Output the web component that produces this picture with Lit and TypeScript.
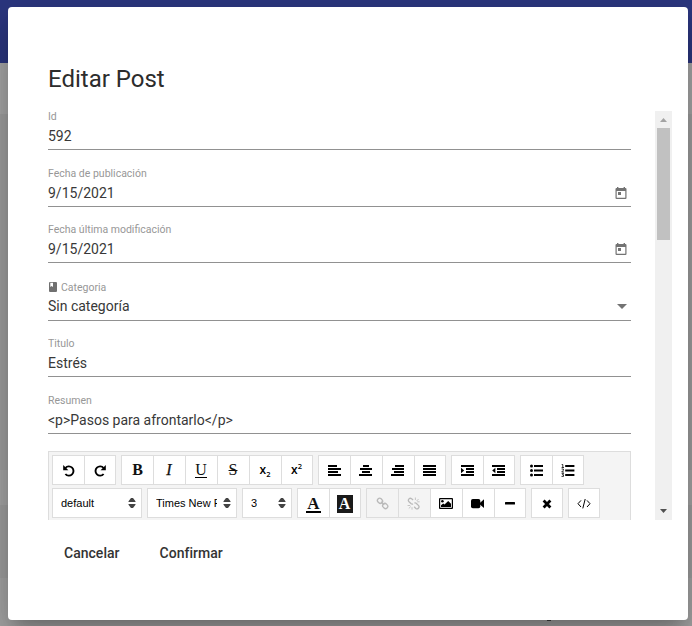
import { LitElement, html, svg, css, nothing } from "lit";
import { customElement, property } from "lit/decorators.js";

const lines = (rows: number[][]) =>
  rows.map(([x, y, w]) => svg`<rect x=${x} y=${y} width=${w} height="2"></rect>`);

const icons: Record<string, unknown> = {
  undo: svg`<path d="M3.4 5A4.6 4.6 0 1 1 3.4 11" fill="none" stroke="currentColor" stroke-width="1.9"></path><path d="M1.2 2V7.2H6.4Z"></path>`,
  redo: svg`<path d="M10.6 5A4.6 4.6 0 1 0 10.6 11" fill="none" stroke="currentColor" stroke-width="1.9"></path><path d="M12.8 2V7.2H7.6Z"></path>`,
  left: lines([[0, 2, 9], [0, 5, 13], [0, 8, 10], [0, 11, 13]]),
  center: lines([[4, 2, 6], [1, 5, 12], [3, 8, 8], [0, 11, 13]]),
  right: lines([[4, 2, 9], [1, 5, 12], [3, 8, 10], [0, 11, 13]]),
  justify: lines([[0, 2, 13], [0, 5, 13], [0, 8, 13], [0, 11, 13]]),
  indent: svg`${lines([[0, 2, 13], [5, 5, 8], [5, 8, 8], [0, 11, 13]])}<path d="M0 4.8L3.2 7.5L0 10.2Z"></path>`,
  outdent: svg`${lines([[0, 2, 13], [5, 5, 8], [5, 8, 8], [0, 11, 13]])}<path d="M3.4 4.8L.2 7.5L3.4 10.2Z"></path>`,
  bullets: svg`${lines([[4, 2, 9], [4, 6.5, 9], [4, 11, 9]])}<circle cx="1.5" cy="3" r="1.5"></circle><circle cx="1.5" cy="7.5" r="1.5"></circle><circle cx="1.5" cy="12" r="1.5"></circle>`,
  numbers: svg`${lines([[4.2, 2, 9.2], [4.2, 6.5, 9.2], [4.2, 11, 9.2]])}<path d="M.7 1.5H1.8V4.3M.6 4.5H3M.6 6H2.4V7.2L.7 9H3M.6 10.4H2.6L1.5 11.8H2.5V13.4H.5" fill="none" stroke="currentColor" stroke-width=".8"></path>`,
  link: svg`<g fill="none" stroke="currentColor" stroke-width="1.3"><rect x="-2.7" y="-2.2" width="5.4" height="4.4" rx="2.1" transform="translate(4 4.8) rotate(45)"></rect><rect x="-2.7" y="-2.2" width="5.4" height="4.4" rx="2.1" transform="translate(9.2 10) rotate(45)"></rect><path d="M5 5.8L8.2 9"></path></g>`,
  unlink: svg`<g fill="none" stroke="currentColor" stroke-width="1.3"><path d="M6.1 4L4.6 2.7A2 2 0 0 0 1.8 5.5L4.2 7.8Q5 8.3 6 7.8M7.2 10.8L8.8 12.4A2 2 0 0 0 11.6 9.6L9.2 7.2Q8.4 6.7 7.4 7.2"></path><path d="M8.4 1.5V4M9.6 5L11.6 3M10.2 5.8H12.6M.6 9.5H3.2M1.8 12.4L3.8 10.6M5 11.2V13.6" stroke-width=".8"></path></g>`,
  image: svg`<path fill-rule="evenodd" d="M1 2H13Q14 2 14 3V12Q14 13 13 13H1Q0 13 0 12V3Q0 2 1 2ZM1.2 3.2V11.8H12.8V3.2Z"></path><circle cx="3.4" cy="5.3" r="1.3"></circle><path d="M2 11V9.2L4.2 7.4L5.5 8.6L9.2 5L12 7.8V11Z"></path>`,
  video: svg`<rect x="0" y="3" width="9.3" height="9.2" rx="1.8"></rect><path d="M8.3 7.6L13 3.2V12L8.3 7.9Z"></path>`,
  rule: svg`<rect x="2" y="6" width="10" height="2.4" rx=".5"></rect>`,
  clear: svg`<path d="M3.6 4.6L10.4 11.4M10.4 4.6L3.6 11.4" stroke="currentColor" stroke-width="2.8"></path>`,
  code: svg`<path d="M4 4.4L1 7.7L4 11M10 4.4L13 7.7L10 11M8.2 3L5.8 12.4" fill="none" stroke="currentColor" stroke-width="1"></path>`,
};

@customElement("post-field")
class PostField extends LitElement {
  @property() label = "";
  @property() value = "";
  @property() kind = "text";
  static styles = css`
    :host { display: flex; flex-direction: column; justify-content: flex-end; box-sizing: border-box; border-bottom: 1px solid #919191; }
    .label { display: flex; align-items: center; height: 14px; font-size: 10.5px; line-height: 14px; color: #979797; }
    .row { display: flex; justify-content: space-between; align-items: center; height: 23px; padding-bottom: 2px; font-size: 14px; color: #383838; }
    .value { padding-top: 2px; line-height: 21px; }
    .select .row { height: 22px; padding-bottom: 3px; }
    .select .value { padding-top: 0; line-height: 22px; }
    .book { width: 8px; height: 10px; margin: -3px 4px 0 1px; fill: #707070; }
    .cal { width: 12px; height: 14px; margin-right: 4px; fill: #737373; }
    .caret { width: 10px; height: 5px; margin-right: 4px; fill: #737373; }
  `;
  render() {
    return html`<div class=${this.kind}>
      <div class="label">${this.kind === "select"
        ? html`<svg class="book" viewBox="0 0 8 10"><path fill-rule="evenodd" d="M1 0H7Q8 0 8 1V9Q8 10 7 10H1Q0 10 0 9V1Q0 0 1 0ZM1.3 .8V5L2.6 4.1L4 5V.8Z"></path></svg>`
        : nothing}${this.label}</div>
      <div class="row"><span class="value">${this.value}</span>${this.kind === "date"
        ? html`<svg class="cal" viewBox="0 0 12 14"><path fill-rule="evenodd" d="M2 1H3.4V2H8.6V1H10V2H10.4Q11.5 2 11.5 3V12Q11.5 13 10.4 13H1.6Q.5 13 .5 12V3Q.5 2 1.6 2H2ZM1.7 5V11.8H10.3V5ZM3 6H6V9H3Z"></path></svg>`
        : this.kind === "select"
        ? html`<svg class="caret" viewBox="0 0 10 5"><path d="M0 0H10L5 5Z"></path></svg>`
        : nothing}</div>
    </div>`;
  }
}

@customElement("editor-toolbar")
class EditorToolbar extends LitElement {
  static styles = css`
    :host { display: flex; flex-direction: column; gap: 3px; box-sizing: border-box; height: 80px; padding: 3px; border: 1px solid #ddd; background: #f4f4f4; color: #000; }
    .line { display: flex; gap: 5px; }
    .group { display: flex; box-sizing: border-box; height: 30px; border: 1px solid #ddd; background: #fff; }
    .btn { display: flex; align-items: center; justify-content: center; box-sizing: border-box; width: 32px; padding-right: 1px; border-left: 1px solid #ddd; }
    .btn:first-child { width: 31px; border-left: 0; padding-right: 0; }
    .btn:last-child:not(:first-child) { width: 31px; padding-right: 1px; }
    .btn:only-child { width: 30px; }
    .icon { width: 14px; height: 15px; fill: currentColor; overflow: visible; }
    .off { background: #f4f4f4; color: #b9b9b9; }
    .serif { font: 700 16px/20px "Liberation Serif", serif; color: #111; }
    .italic { font-style: italic; font-weight: 400; -webkit-text-stroke: .25px #111; }
    .under { font-weight: 400; line-height: 14px; border-bottom: 1px solid #000; }
    .strike { font-weight: 400; text-decoration: line-through; text-decoration-thickness: 1px; }
    .script { font: 600 12px/16px "Open Sans", sans-serif; }
    .script sub, .script sup { font-size: 7.5px; line-height: 0; }
    .fore { line-height: 15px; font-size: 17px; border-bottom: 2px solid #000; padding: 0 1px; margin-top: 2px; }
    .back { width: 16px; height: 18px; line-height: 18px; margin-top: 1px; background: #1a1a1a; color: #fff; text-align: center; }
    .picker { display: flex; align-items: center; justify-content: space-between; box-sizing: border-box; height: 30px; padding: 0 5px 0 8px; border: 1px solid #ddd; background: #fff; font: 11px/14px "Liberation Sans", Arial, sans-serif; }
    .picker span { overflow: hidden; white-space: nowrap; }
    .wide { width: 90px; }
    .narrow { width: 50px; }
    .sort { flex: none; width: 8px; height: 10px; fill: #444; }
    .name { width: 61px; }
  `;
  btn(name: string, off = false) {
    return html`<div class="btn ${off ? "off" : ""}"><svg class="icon" viewBox="0 0 14 15">${icons[name]}</svg></div>`;
  }
  picker(text: string, size: string) {
    return html`<div class="picker ${size}"><span class=${size === "wide" ? "name" : ""}>${text}</span><svg class="sort" viewBox="0 0 8 10"><path d="M.5 4V3.3L3 0H5L7.5 3.3V4ZM.5 6H7.5V6.7L5 10H3L.5 6.7Z"></path></svg></div>`;
  }
  render() {
    return html`
      <div class="line">
        <div class="group">${this.btn("undo")}${this.btn("redo")}</div>
        <div class="group">
          <div class="btn"><span class="serif">B</span></div>
          <div class="btn"><span class="serif italic">I</span></div>
          <div class="btn"><span class="serif under">U</span></div>
          <div class="btn"><span class="serif strike">S</span></div>
          <div class="btn"><span class="script">x<sub>2</sub></span></div>
          <div class="btn"><span class="script">x<sup>2</sup></span></div>
        </div>
        <div class="group">${["left", "center", "right", "justify"].map((n) => this.btn(n))}</div>
        <div class="group">${this.btn("indent")}${this.btn("outdent")}</div>
        <div class="group">${this.btn("bullets")}${this.btn("numbers")}</div>
      </div>
      <div class="line">
        ${this.picker("default", "wide")}${this.picker("Times New Roman", "wide")}${this.picker("3", "narrow")}
        <div class="group">
          <div class="btn"><span class="serif fore">A</span></div>
          <div class="btn"><span class="serif back">A</span></div>
        </div>
        <div class="group">${this.btn("link", true)}${this.btn("unlink", true)}${this.btn("image")}${this.btn("video")}${this.btn("rule")}</div>
        <div class="group">${this.btn("clear")}</div>
        <div class="group">${this.btn("code")}</div>
      </div>`;
  }
}

@customElement("app-root")
class AppRoot extends LitElement {
  static styles = css`
    :host { display: block; box-sizing: border-box; width: 692px; height: 626px; padding: 7px 4px 6px 8px; overflow: hidden; font-family: Roboto, sans-serif;
      background: linear-gradient(#2c3780 0 63px, #a9a9a9 63px 114px, #a1a1a1 114px 470px, #a8a8a8 470px 505px, #a1a1a1 505px 578px, #a7a7a7 578px); }
    .dialog { display: flex; flex-direction: column; box-sizing: border-box; width: 680px; height: 613px; padding: 56px 16px 0 40px; border-radius: 4px; background: #fff;
      box-shadow: 0 11px 15px -7px rgba(0,0,0,.2), 0 24px 38px 3px rgba(0,0,0,.14), 0 9px 46px 8px rgba(0,0,0,.12); }
    .peek { width: 4px; height: 1px; margin-left: 539px; background: #2b2b2b; }
    .title { margin: 0 0 16px; height: 32px; font-size: 24px; line-height: 32px; font-weight: 400; color: #2c2c2c; }
    .body { display: flex; justify-content: space-between; height: 409px; overflow: hidden; }
    .form { display: grid; grid-template-rows: 39px 57px 56px 58px 56px 57px 80px; width: 583px; height: 409px; overflow: hidden; }
    .tools { margin-top: 17px; }
    .bar { display: flex; flex-direction: column; align-items: center; box-sizing: border-box; width: 17px; height: 409px; padding: 7px 0 7px; background: #f0f0f0; }
    .arrow { width: 7px; height: 4px; fill: #a3a3a3; }
    .down { margin-top: auto; fill: #505050; }
    .thumb { width: 13px; height: 112px; margin-top: 6px; background: #c1c1c1; }
    .actions { display: flex; gap: 8px; margin-top: 15px; }
    .action { padding: 0 16px; font-size: 14px; line-height: 36px; font-weight: 500; color: #333; letter-spacing: .02px; }
  `;
  render() {
    return html`<div class="dialog">
      <h1 class="title">Editar Post</h1>
      <div class="body">
        <div class="form">
          <post-field label="Id" value="592"></post-field>
          <post-field label="Fecha de publicación" value="9/15/2021" kind="date"></post-field>
          <post-field label="Fecha última modificación" value="9/15/2021" kind="date"></post-field>
          <post-field label="Categoria" value="Sin categoría" kind="select"></post-field>
          <post-field label="Titulo" value="Estrés"></post-field>
          <post-field label="Resumen" value="<p>Pasos para afrontarlo</p>"></post-field>
          <editor-toolbar class="tools"></editor-toolbar>
        </div>
        <div class="bar">
          <svg class="arrow" viewBox="0 0 7 4"><path d="M0 4L3.5 0L7 4Z"></path></svg>
          <div class="thumb"></div>
          <svg class="arrow down" viewBox="0 0 7 4"><path d="M0 0H7L3.5 4Z"></path></svg>
        </div>
      </div>
      <div class="actions"><span class="action">Cancelar</span><span class="action">Confirmar</span></div>
    </div><div class="peek"></div>`;
  }
}
